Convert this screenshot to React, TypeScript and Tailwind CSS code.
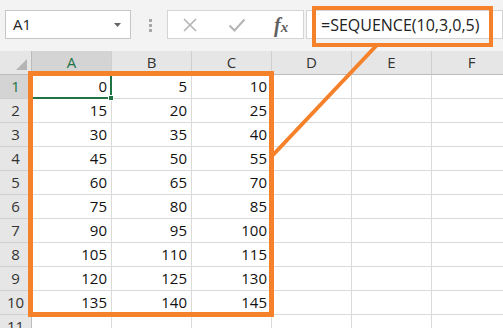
const cols = ['A', 'B', 'C', 'D', 'E', 'F']
const rows = Array.from({ length: 11 }, (_, r) => (r < 10 ? [r * 15, r * 15 + 5, r * 15 + 10] : []))

function FormulaBar() {
  return (
    <div className="flex h-[51px] items-start bg-[#f3f3f3] pl-[5px] pt-[10px]">
      <div className="flex h-[29px] w-[126px] items-center justify-between border border-[#c6c6c6] bg-white pl-[7px] pr-[9px] text-[15px] text-[#222]">
        <span>A1</span>
        <svg width="7" height="4" viewBox="0 0 7 4">
          <path d="M0 0h7L3.5 4z" fill="#666" />
        </svg>
      </div>
      <div className="ml-[18px] mt-[9px] flex flex-col gap-[2px]">
        <span className="h-[3px] w-[3px] bg-[#a8a8a8]" />
        <span className="h-[3px] w-[3px] bg-[#a8a8a8]" />
        <span className="h-[3px] w-[3px] bg-[#a8a8a8]" />
      </div>
      <div className="ml-[15px] flex h-[29px] w-[137px] items-center border border-[#d4d4d4] bg-white">
        <svg className="ml-[14px]" width="16" height="16" viewBox="0 0 16 16">
          <path d="M2 2l12 12M14 2L2 14" stroke="#b4b4b4" strokeWidth="1.6" fill="none" />
        </svg>
        <svg className="ml-[30px]" width="18" height="16" viewBox="0 0 18 16">
          <path d="M1.5 8.5l5 5L16.5 2.5" stroke="#b4b4b4" strokeWidth="2" fill="none" />
        </svg>
        <span className="ml-[28px] font-['Liberation_Serif',serif] text-[20px] font-bold italic leading-none text-[#5f5f5f]">
          f<span className="text-[15px]">x</span>
        </span>
      </div>
      <div className="ml-[2px] flex h-[29px] flex-1 items-center border border-[#d4d4d4] bg-white pl-[14px] text-[16px] text-[#222]">
        =SEQUENCE(10,3,0,5)
      </div>
    </div>
  )
}

function Sheet() {
  return (
    <div className="grid w-[512px] grid-cols-[32px_repeat(6,80px)] text-[15px]">
      <div className="flex h-6 items-end justify-end border-b border-r border-[#bcbcbc] bg-[#e6e6e6] pb-[4px] pr-[4px]">
        <svg width="11" height="11" viewBox="0 0 11 11">
          <path d="M11 0v11H0z" fill="#b5b5b5" />
        </svg>
      </div>
      {cols.map((c, i) => (
        <div
          key={c}
          className={
            i === 0
              ? 'flex h-6 items-center justify-center border-b border-r border-b-[#bcbcbc] border-r-[#cfcfcf] bg-[#d4d4d4] text-[#217346]'
              : 'flex h-6 items-center justify-center border-b border-r border-b-[#bcbcbc] border-r-[#cfcfcf] bg-[#e6e6e6] text-[#333]'
          }
        >
          {c}
        </div>
      ))}
      {rows.map((vals, r) => (
        <div key={r} className="contents">
          <div
            className={
              r === 0
                ? 'flex h-6 items-center justify-center border-b border-r border-b-[#cfcfcf] border-r-[#bcbcbc] bg-[#d4d4d4] text-[#217346]'
                : 'flex h-6 items-center justify-center border-b border-r border-b-[#cfcfcf] border-r-[#bcbcbc] bg-[#e6e6e6] text-[#333]'
            }
          >
            {r + 1}
          </div>
          {cols.map((c, i) => (
            <div
              key={c}
              className={
                r === 0 && i === 0
                  ? 'relative flex h-6 items-center justify-end border-b-2 border-r-2 border-[#217346] pr-[3px] text-[#111]'
                  : 'flex h-6 items-center justify-end border-b border-r border-[#dadada] pr-[4px] text-[#111]'
              }
            >
              {vals[i] ?? ''}
              {r === 0 && i === 0 && (
                <span className="absolute -bottom-[4px] -right-[4px] h-[6px] w-[6px] border border-white bg-[#217346]" />
              )}
            </div>
          ))}
        </div>
      ))}
    </div>
  )
}

export default function App() {
  return (
    <div className="relative h-[328px] w-[503px] overflow-hidden bg-white font-['Open_Sans',sans-serif]">
      <FormulaBar />
      <Sheet />
      {/* callouts */}
      <div className="pointer-events-none absolute left-[312px] top-[6px] h-[41px] w-[181px] border-4 border-[#f5822a]" />
      <div className="pointer-events-none absolute left-[28px] top-[71px] h-[246px] w-[246px] border-[5px] border-[#f5822a]" />
      <svg className="pointer-events-none absolute inset-0" width="503" height="328">
        <line x1="376" y1="46" x2="272" y2="156" stroke="#f5822a" strokeWidth="4" />
      </svg>
    </div>
  )
}
